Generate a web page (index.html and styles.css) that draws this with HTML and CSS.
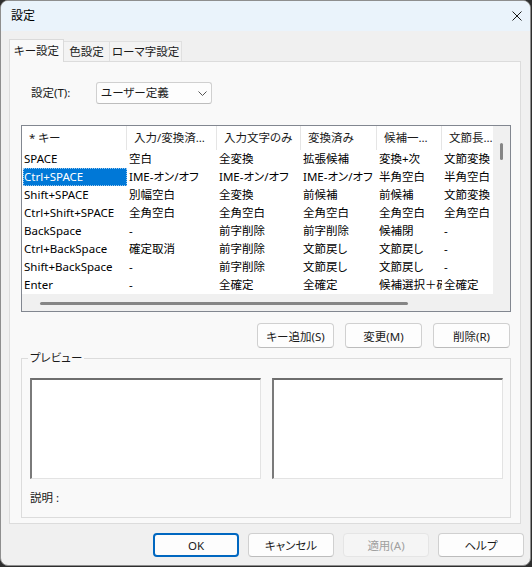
FILE: index.html
```html
<!DOCTYPE html>
<html lang="ja">
<head>
<meta charset="utf-8">
<title>設定</title>
<link rel="stylesheet" href="styles.css">
</head>
<body>
<div class="window">
  <div class="titlebar">
    <span class="title">設定</span>
    <svg class="close" width="10" height="10" viewBox="0 0 10 10"><path d="M0.5 0.5 L9.5 9.5 M9.5 0.5 L0.5 9.5" stroke="#1a1a1a" stroke-width="1" fill="none"/></svg>
  </div>
  <div class="client">
    <div class="tabs">
      <div class="tab active">キー設定</div>
      <div class="tab t2">色設定</div>
      <div class="tab t3">ローマ字設定</div>
    </div>
    <div class="page">
      <div class="setting-row">
        <span class="label">設定(T):</span>
        <div class="combo">
          <span>ユーザー定義</span>
          <svg class="chev" width="9" height="5" viewBox="0 0 9 5"><path d="M0.5 0.5 L4.5 4.5 L8.5 0.5" stroke="#555" stroke-width="1" fill="none"/></svg>
        </div>
      </div>
      <div class="list">
        <div class="list-main">
          <div class="grid">
            <div class="row head">
              <div class="hc">* キー</div>
              <div class="hc">入力/変換済み文字なし</div>
              <div class="hc">入力文字のみ</div>
              <div class="hc">変換済み</div>
              <div class="hc">候補一覧表示中</div>
              <div class="hc">文節長変更中</div>
            </div>
            <div class="row"><div class="c">SPACE</div><div class="c">空白</div><div class="c">全変換</div><div class="c">拡張候補</div><div class="c">変換+次</div><div class="c">文節変換</div></div>
            <div class="row"><div class="c sel">Ctrl+SPACE</div><div class="c">IME-オン/オフ</div><div class="c">IME-オン/オフ</div><div class="c">IME-オン/オフ</div><div class="c">半角空白</div><div class="c">半角空白</div></div>
            <div class="row"><div class="c">Shift+SPACE</div><div class="c">別幅空白</div><div class="c">全変換</div><div class="c">前候補</div><div class="c">前候補</div><div class="c">文節変換</div></div>
            <div class="row"><div class="c">Ctrl+Shift+SPACE</div><div class="c">全角空白</div><div class="c">全角空白</div><div class="c">全角空白</div><div class="c">全角空白</div><div class="c">全角空白</div></div>
            <div class="row"><div class="c">BackSpace</div><div class="c">-</div><div class="c">前字削除</div><div class="c">前字削除</div><div class="c">候補閉</div><div class="c">-</div></div>
            <div class="row"><div class="c">Ctrl+BackSpace</div><div class="c">確定取消</div><div class="c">前字削除</div><div class="c">文節戻し</div><div class="c">文節戻し</div><div class="c">-</div></div>
            <div class="row"><div class="c">Shift+BackSpace</div><div class="c">-</div><div class="c">前字削除</div><div class="c">文節戻し</div><div class="c">文節戻し</div><div class="c">-</div></div>
            <div class="row"><div class="c">Enter</div><div class="c">-</div><div class="c">全確定</div><div class="c">全確定</div><div class="c">候補選択＋確定</div><div class="c">全確定</div></div>
          </div>
          <div class="hscroll"><div class="hthumb"></div></div>
        </div>
        <div class="vscroll"><div class="vthumb"></div></div>
      </div>
      <div class="actions">
        <button class="btn">キー追加(S)</button>
        <button class="btn">変更(M)</button>
        <button class="btn">削除(R)</button>
      </div>
      <fieldset class="preview">
        <legend>プレビュー</legend>
        <div class="boxes">
          <div class="pbox"></div>
          <div class="pbox"></div>
        </div>
        <div class="desc">説明 :</div>
      </fieldset>
    </div>
    <div class="dialog-buttons">
      <button class="dbtn default">OK</button>
      <button class="dbtn">キャンセル</button>
      <button class="dbtn disabled">適用(A)</button>
      <button class="dbtn">ヘルプ</button>
    </div>
  </div>
</div>
</body>
</html>
```

FILE: styles.css
```css
* { box-sizing: border-box; }
html, body { margin: 0; padding: 0; }
body {
  width: 532px;
  height: 567px;
  overflow: hidden;
  background: #2e2e2e;
  font-family: "Noto Sans", "Noto Sans CJK JP", sans-serif;
  font-size: 11.5px;
  font-feature-settings: "palt";
  color: #1a1a1a;
}
.window {
  width: 531px;
  height: 566px;
  border: 1px solid #8e8e8e;
  border-radius: 8px;
  overflow: hidden;
  background: #f0f0f0;
  display: flex;
  flex-direction: column;
}
.titlebar {
  height: 30px;
  flex: none;
  background: #eaf3fb;
  display: flex;
  align-items: center;
  justify-content: space-between;
  padding: 0 8px 0 10px;
}
.title { font-size: 12px; line-height: 16px; color: #000; }
.close { display: block; margin-top: -1px; }
.client {
  flex: 1;
  display: flex;
  flex-direction: column;
  padding: 8px 9px 0 8px;
}
.tabs {
  display: flex;
  align-items: flex-end;
  height: 23px;
  margin-bottom: -1px;
}
.tab {
  height: 21px;
  line-height: 19px;
  text-align: center;
  background: #f3f3f3;
  border: 1px solid #e0e0e0;
  border-bottom: none;
  font-size: 11.5px;
  color: #1a1a1a;
}
.tab.active {
  position: relative;
  z-index: 1;
  width: 55px;
  height: 23px;
  line-height: 22px;
  background: #f9f9f9;
  border-color: #dadada;
}
.tab.t2 { width: 46px; border-left: none; }
.tab.t3 { width: 72px; border-left: none; }
.page {
  background: #f9f9f9;
  border: 1px solid #dcdcdc;
  padding: 20px 9px 5px 11px;
}
.setting-row {
  display: flex;
  align-items: center;
  height: 22px;
}
.label { width: 75px; padding-left: 10px; line-height: 16px; }
.combo {
  width: 116px;
  height: 22px;
  background: #fdfdfd;
  border: 1px solid #d0d0d0;
  border-bottom-color: #bdbdbd;
  border-radius: 3px;
  display: flex;
  align-items: center;
  justify-content: space-between;
  padding: 0 4px 0 4px;
}
.combo span { line-height: 18px; color: #1a1a1a; }
.chev { display: block; }
.list {
  margin-top: 21px;
  height: 187px;
  border: 1px solid #828790;
  background: #fff;
  display: flex;
}
.list-main {
  width: 471px;
  display: flex;
  flex-direction: column;
  overflow: hidden;
}
.grid { flex: 1; overflow: hidden; }
.row {
  display: grid;
  grid-template-columns: 105px 90px 84px 76px 65px 60px;
  height: 18px;
  line-height: 18px;
  color: #000;
}
.row.head { height: 24px; line-height: 23px; }
.hc {
  padding: 0 6px 0 7px;
  border-right: 1px solid #e5e5e5;
  overflow: hidden;
  white-space: nowrap;
  text-overflow: ellipsis;
  color: #1a1a1a;
}
.c {
  padding-left: 2px;
  overflow: hidden;
  white-space: nowrap;
}
.c.sel {
  background: #0078d7;
  color: #fff;
  margin-left: 1px;
  padding-left: 1px;
  outline: 1px dotted #9cc8ee;
  outline-offset: -1px;
}
.hscroll {
  height: 17px;
  flex: none;
  background: #f0f0f0;
  padding-top: 8px;
}
.hthumb {
  margin-left: 18px;
  width: 368px;
  height: 3px;
  border-radius: 2px;
  background: #858585;
}
.vscroll {
  width: 17px;
  flex: none;
  background: #f0f0f0;
  padding-top: 17px;
}
.vthumb {
  margin-left: 7px;
  width: 3px;
  height: 17px;
  border-radius: 2px;
  background: #858585;
}
.actions {
  margin-top: 11px;
  display: flex;
  justify-content: flex-end;
  gap: 11px;
  padding-right: 1px;
}
.btn, .dbtn {
  font-family: inherit;
  font-size: 11.5px;
  font-feature-settings: "palt";
  color: #1a1a1a;
  background: #fdfdfd;
  border: 1px solid #d0d0d0;
  border-bottom-color: #bcbcbc;
  border-radius: 4px;
  padding: 0;
  margin: 0;
}
.btn { width: 77px; height: 25px; }
.preview {
  margin: 3px 0 0 0;
  padding: 13px 7px 10px 8px;
  border: 1px solid #dcdcdc;
  min-inline-size: 0;
}
.preview legend {
  padding: 0 2px;
  margin-left: -2px;
  line-height: 14px;
  font-size: 11.5px;
  color: #1a1a1a;
}
.boxes {
  display: grid;
  grid-template-columns: 1fr 1fr;
  gap: 11px;
}
.pbox {
  height: 101px;
  background: #fff;
  border-style: solid;
  border-width: 2px 1px 1px 2px;
  border-color: #6e6e6e #e3e3e3 #e3e3e3 #7a7a7a;
}
.desc {
  margin-top: 10px;
  line-height: 18px;
  color: #1a1a1a;
}
.dialog-buttons {
  margin-top: 9px;
  margin-right: -3px;
  display: flex;
  justify-content: flex-end;
  gap: 9px;
}
.dbtn { width: 86px; height: 24px; }
.dbtn.default { border: 2px solid #0067c0; }
.dbtn.disabled {
  background: #f5f5f5;
  border-color: #e5e5e5;
  color: #a0a0a0;
}
```
